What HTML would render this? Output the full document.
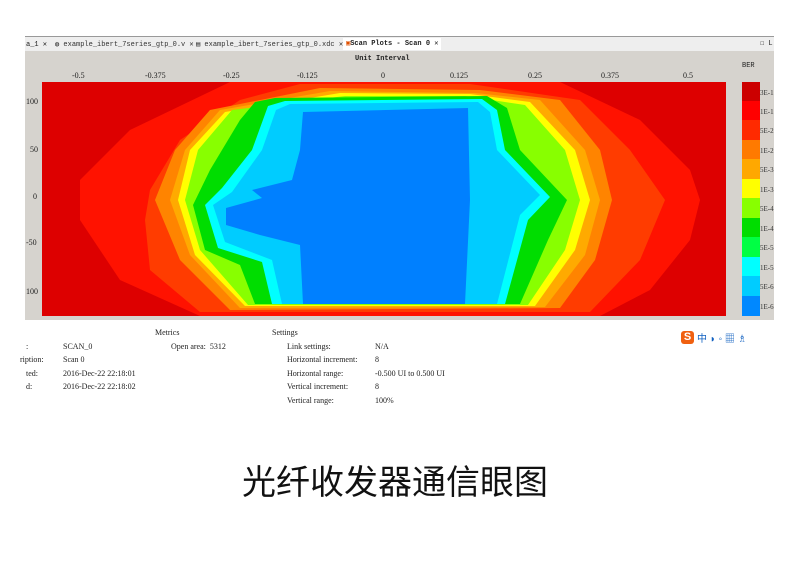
<!DOCTYPE html>
<html><head><meta charset="utf-8"><style>
body{margin:0;width:790px;height:576px;background:#fff;position:relative;overflow:hidden;font-family:"Liberation Mono",monospace;}
.a{position:absolute;font-size:7px;color:#222;white-space:nowrap;}
.s{position:absolute;font-family:"Liberation Serif",serif;font-size:8px;color:#222;white-space:nowrap;}
</style></head><body>
<div style="position:absolute;left:25px;top:36px;width:749px;height:14px;background:#eeeeee;border-top:1px solid #999;border-bottom:1px solid #aaa"></div>
<div class="a" style="left:26px;top:40px">a_1 ✕</div>
<div class="a" style="left:55px;top:40px;color:#333">◍ example_ibert_7series_gtp_0.v ✕</div>
<div class="a" style="left:196px;top:40px;color:#333">▤ example_ibert_7series_gtp_0.xdc ✕</div>
<div class="a" style="left:343px;top:38px;background:#fff;height:12px;line-height:12px;font-weight:bold;padding:0 3px"><span style="color:#e05000">▣</span>Scan Plots - Scan 0 ✕</div>
<div class="a" style="left:760px;top:39px">☐ L</div>
<div style="position:absolute;left:25px;top:51px;width:749px;height:269px;background:#d6d3ce"></div>
<div class="a" style="left:355px;top:55px;font-weight:bold">Unit Interval</div>
<div class="a" style="left:742px;top:62px">BER</div>
<div class="s" style="left:72px;top:71px">-0.5</div>
<div class="s" style="left:145px;top:71px">-0.375</div>
<div class="s" style="left:223px;top:71px">-0.25</div>
<div class="s" style="left:297px;top:71px">-0.125</div>
<div class="s" style="left:381px;top:71px">0</div>
<div class="s" style="left:450px;top:71px">0.125</div>
<div class="s" style="left:528px;top:71px">0.25</div>
<div class="s" style="left:601px;top:71px">0.375</div>
<div class="s" style="left:683px;top:71px">0.5</div>
<div class="s" style="left:26px;top:97px">100</div>
<div class="s" style="left:30px;top:145px">50</div>
<div class="s" style="left:33px;top:192px">0</div>
<div class="s" style="left:26px;top:238px">-50</div>
<div class="s" style="left:26px;top:287px">100</div>
<svg style="position:absolute;left:0;top:0" width="790" height="330">
<rect x="42" y="82" width="684" height="234" fill="#dd0000"/>
<polygon fill="#ff1200" points="230,82 560,82 640,120 690,170 700,200 690,240 650,290 600,316 200,316 120,280 80,220 80,180 130,130"/>
<polygon fill="#ff3c00" points="300,84 470,84 580,100 630,150 665,200 640,260 590,312 200,312 150,270 145,220 150,190 180,140 240,100"/>
<polygon fill="#ff8400" points="320,88 480,90 560,100 600,150 612,200 595,260 560,308 230,310 180,260 155,200 175,150 210,110"/>
<polygon fill="#ffaa00" points="330,91 475,93 540,100 585,150 600,200 585,255 545,307 240,308 190,255 170,200 185,150 220,110"/>
<polygon fill="#ffff00" points="340,93 470,94 530,102 575,150 590,200 575,250 535,306 245,306 195,255 178,200 190,150 225,112"/>
<polygon fill="#88ff00" points="345,96 465,96 525,105 565,150 580,200 565,250 528,305 248,305 200,250 185,200 198,150 232,110"/>
<polygon fill="#00dd00" points="275,98 487,96 507,108 520,150 567,200 548,240 520,304 255,304 240,265 205,250 193,205 210,170 240,120 255,102"/>
<polygon fill="#00ffff" points="285,101 482,99 497,110 505,150 550,197 528,220 505,304 272,304 262,262 218,248 205,205 222,188 252,150 268,106"/>
<polygon fill="#00ccff" points="290,104 478,102 490,112 497,150 540,195 520,215 497,304 282,304 272,260 225,242 213,205 232,192 262,150 276,110"/>
<polygon fill="#0080ff" points="303,112 468,108 470,200 465,304 303,304 300,245 260,235 226,225 226,208 262,198 252,190 292,180 300,150"/>
<g>
<rect x="742" y="82" width="18" height="20" fill="#cc0000"/>
<rect x="742" y="101" width="18" height="20" fill="#ff0000"/>
<rect x="742" y="120" width="18" height="20" fill="#ff2a00"/>
<rect x="742" y="140" width="18" height="20" fill="#ff7a00"/>
<rect x="742" y="159" width="18" height="20" fill="#ffa800"/>
<rect x="742" y="179" width="18" height="20" fill="#ffff00"/>
<rect x="742" y="198" width="18" height="20" fill="#88ff00"/>
<rect x="742" y="218" width="18" height="20" fill="#00dd00"/>
<rect x="742" y="237" width="18" height="20" fill="#00ff44"/>
<rect x="742" y="257" width="18" height="20" fill="#00ffff"/>
<rect x="742" y="276" width="18" height="20" fill="#00ccff"/>
<rect x="742" y="296" width="18" height="20" fill="#0088ff"/>
</g>
<g font-family="Liberation Serif" font-size="7" fill="#333">
<text x="760" y="95">3E-1</text><text x="760" y="114">1E-1</text><text x="760" y="133">5E-2</text>
<text x="760" y="153">1E-2</text><text x="760" y="172">5E-3</text><text x="760" y="192">1E-3</text>
<text x="760" y="211">5E-4</text><text x="760" y="231">1E-4</text><text x="760" y="250">5E-5</text>
<text x="760" y="270">1E-5</text><text x="760" y="289">5E-6</text><text x="760" y="309">1E-6</text>
</g>
<line x1="25" y1="335" x2="145" y2="335" stroke="#aaa"/>
<line x1="155" y1="336" x2="265" y2="336" stroke="#aaa"/>
<line x1="272" y1="336" x2="460" y2="336" stroke="#aaa"/>
</svg>
<div class="s" style="left:155px;top:328px">Metrics</div>
<div class="s" style="left:272px;top:328px">Settings</div>
<div class="s" style="left:26px;top:342px">:</div><div class="s" style="left:63px;top:342px">SCAN_0</div>
<div class="s" style="left:20px;top:355px">ription:</div><div class="s" style="left:63px;top:355px">Scan 0</div>
<div class="s" style="left:26px;top:369px">ted:</div><div class="s" style="left:63px;top:369px">2016-Dec-22 22:18:01</div>
<div class="s" style="left:26px;top:382px">d:</div><div class="s" style="left:63px;top:382px">2016-Dec-22 22:18:02</div>
<div class="s" style="left:171px;top:342px">Open area:&nbsp; 5312</div>
<div class="s" style="left:287px;top:342px">Link settings:</div><div class="s" style="left:375px;top:342px">N/A</div>
<div class="s" style="left:287px;top:355px">Horizontal increment:</div><div class="s" style="left:375px;top:355px">8</div>
<div class="s" style="left:287px;top:369px">Horizontal range:</div><div class="s" style="left:375px;top:369px">-0.500 UI to 0.500 UI</div>
<div class="s" style="left:287px;top:382px">Vertical increment:</div><div class="s" style="left:375px;top:382px">8</div>
<div class="s" style="left:287px;top:396px">Vertical range:</div><div class="s" style="left:375px;top:396px">100%</div>
<div style="position:absolute;left:681px;top:331px;width:13px;height:13px;background:#f06010;border-radius:3px;color:#fff;font:bold 11px 'Liberation Sans';text-align:center;line-height:13px">S</div>
<div style="position:absolute;left:697px;top:330px;font:10px 'Liberation Sans','Noto Sans CJK SC',sans-serif;color:#1060c0">中 <span>◗ ◦ ▦ ♗</span></div>
<div style="position:absolute;left:0;top:455px;width:790px;text-align:center;font:34px 'Liberation Sans','Noto Sans CJK SC',sans-serif;color:#111">光纤收发器通信眼图</div>
</body></html>
